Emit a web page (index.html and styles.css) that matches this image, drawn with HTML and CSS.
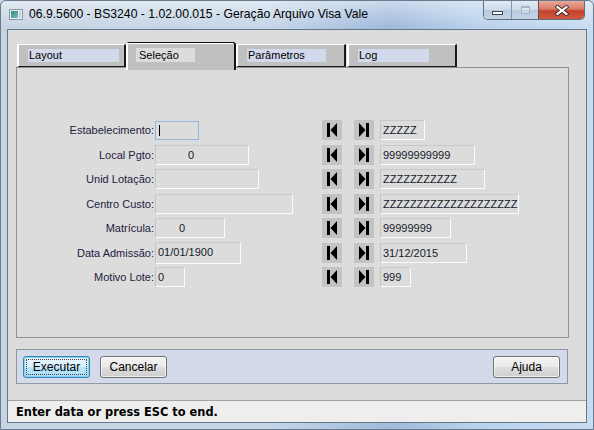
FILE: index.html
```html
<!DOCTYPE html>
<html lang="pt-BR">
<head>
<meta charset="utf-8">
<title>Geração Arquivo Visa Vale</title>
<link rel="stylesheet" href="styles.css">
</head>
<body>
<div class="window">
  <div class="titlebar">
    <svg class="app-icon" width="14" height="11" viewBox="0 0 14 11">
      <defs>
        <linearGradient id="appfill" x1="0" y1="0" x2="1" y2="1">
          <stop offset="0" stop-color="#2f8f6f"/>
          <stop offset="1" stop-color="#7fb6cf"/>
        </linearGradient>
      </defs>
      <rect x="0.5" y="0.5" width="13" height="10" fill="#e9eef2" stroke="#8a96a2"/>
      <rect x="2" y="2" width="7" height="7" fill="url(#appfill)"/>
      <rect x="10" y="2" width="2" height="7" fill="#c9d2da"/>
    </svg>
    <span class="title">06.9.5600 - BS3240 - 1.02.00.015 - Geração Arquivo Visa Vale</span>
    <div class="controls">
      <div class="ctl ctl-min"><span class="min-bar"></span></div>
      <div class="ctl ctl-max"><span class="max-box"></span></div>
      <div class="ctl ctl-close">
        <svg width="14" height="11" viewBox="0 0 14 11">
          <path d="M2.5 2 L11.5 9 M11.5 2 L2.5 9" stroke="#3d2a2a" stroke-width="4" stroke-linecap="square"/>
          <path d="M2.5 2 L11.5 9 M11.5 2 L2.5 9" stroke="#ffffff" stroke-width="2.2" stroke-linecap="square"/>
        </svg>
      </div>
    </div>
  </div>

  <div class="client">
    <div class="tabs">
      <div class="tab"><span class="tab-label tl-layout">Layout</span></div>
      <div class="tab tab-active"><span class="tab-label tl-selecao">Seleção</span></div>
      <div class="tab"><span class="tab-label tl-param">Parâmetros</span></div>
      <div class="tab tab-log"><span class="tab-label tl-log">Log</span></div>
    </div>

    <div class="panel">
      <div class="form">
        <div class="row">
          <span class="lbl">Estabelecimento:</span>
          <div class="left-cell"><div class="field focus w44"><span class="caret"></span></div></div>
          <span class="nav"><svg width="10" height="14" viewBox="0 0 10 14"><rect x="0" y="0" width="3" height="14"/><polygon points="10,0 3.5,7 10,14"/></svg></span>
          <span class="nav"><svg width="10" height="14" viewBox="0 0 10 14"><polygon points="0,0 6.5,7 0,14"/><rect x="7" y="0" width="3" height="14"/></svg></span>
          <div class="field w45">ZZZZZ</div>
        </div>
        <div class="row">
          <span class="lbl">Local Pgto:</span>
          <div class="left-cell"><div class="field w94 pad-num">0</div></div>
          <span class="nav"><svg width="10" height="14" viewBox="0 0 10 14"><rect x="0" y="0" width="3" height="14"/><polygon points="10,0 3.5,7 10,14"/></svg></span>
          <span class="nav"><svg width="10" height="14" viewBox="0 0 10 14"><polygon points="0,0 6.5,7 0,14"/><rect x="7" y="0" width="3" height="14"/></svg></span>
          <div class="field w95">99999999999</div>
        </div>
        <div class="row">
          <span class="lbl">Unid Lotação:</span>
          <div class="left-cell"><div class="field w104"></div></div>
          <span class="nav"><svg width="10" height="14" viewBox="0 0 10 14"><rect x="0" y="0" width="3" height="14"/><polygon points="10,0 3.5,7 10,14"/></svg></span>
          <span class="nav"><svg width="10" height="14" viewBox="0 0 10 14"><polygon points="0,0 6.5,7 0,14"/><rect x="7" y="0" width="3" height="14"/></svg></span>
          <div class="field w105">ZZZZZZZZZZZ</div>
        </div>
        <div class="row">
          <span class="lbl">Centro Custo:</span>
          <div class="left-cell"><div class="field w138"></div></div>
          <span class="nav"><svg width="10" height="14" viewBox="0 0 10 14"><rect x="0" y="0" width="3" height="14"/><polygon points="10,0 3.5,7 10,14"/></svg></span>
          <span class="nav"><svg width="10" height="14" viewBox="0 0 10 14"><polygon points="0,0 6.5,7 0,14"/><rect x="7" y="0" width="3" height="14"/></svg></span>
          <div class="field w139">ZZZZZZZZZZZZZZZZZZZZ</div>
        </div>
        <div class="row">
          <span class="lbl">Matrícula:</span>
          <div class="left-cell"><div class="field w70 pad-mat">0</div></div>
          <span class="nav"><svg width="10" height="14" viewBox="0 0 10 14"><rect x="0" y="0" width="3" height="14"/><polygon points="10,0 3.5,7 10,14"/></svg></span>
          <span class="nav"><svg width="10" height="14" viewBox="0 0 10 14"><polygon points="0,0 6.5,7 0,14"/><rect x="7" y="0" width="3" height="14"/></svg></span>
          <div class="field w71">99999999</div>
        </div>
        <div class="row">
          <span class="lbl">Data Admissão:</span>
          <div class="left-cell"><div class="field w86 tall">01/01/1900</div></div>
          <span class="nav"><svg width="10" height="14" viewBox="0 0 10 14"><rect x="0" y="0" width="3" height="14"/><polygon points="10,0 3.5,7 10,14"/></svg></span>
          <span class="nav"><svg width="10" height="14" viewBox="0 0 10 14"><polygon points="0,0 6.5,7 0,14"/><rect x="7" y="0" width="3" height="14"/></svg></span>
          <div class="field w87">31/12/2015</div>
        </div>
        <div class="row">
          <span class="lbl">Motivo Lote:</span>
          <div class="left-cell"><div class="field w30">0</div></div>
          <span class="nav"><svg width="10" height="14" viewBox="0 0 10 14"><rect x="0" y="0" width="3" height="14"/><polygon points="10,0 3.5,7 10,14"/></svg></span>
          <span class="nav"><svg width="10" height="14" viewBox="0 0 10 14"><polygon points="0,0 6.5,7 0,14"/><rect x="7" y="0" width="3" height="14"/></svg></span>
          <div class="field w31">999</div>
        </div>
      </div>
    </div>

    <div class="buttonbar">
      <button class="btn btn-default"><span class="focus-ring">Executar</span></button>
      <button class="btn">Cancelar</button>
      <button class="btn btn-help">Ajuda</button>
    </div>

    <div class="status">Enter data or press ESC to end.</div>
  </div>
</div>
</body>
</html>
```
FILE: styles.css
```css
* { box-sizing: border-box; }

html, body {
  margin: 0;
  padding: 0;
}

body {
  width: 594px;
  height: 430px;
  overflow: hidden;
  background: #c4d7ec;
  font-family: "Liberation Sans", Arial, sans-serif;
}

/* ---- window frame ---- */
.window {
  width: 594px;
  height: 430px;
  display: flex;
  flex-direction: column;
  border: 1px solid #6b7b8f;
  border-radius: 6px 6px 0 0;
  background:
    linear-gradient(180deg, rgba(255,255,255,0.45) 0px, rgba(255,255,255,0) 26px),
    linear-gradient(90deg, #c7d4e2 0%, #c6d6e8 45%, #9fbadb 66%, #b9d1ec 80%, #c8dcf1 100%);
}

.titlebar {
  height: 28px;
  flex: none;
  display: flex;
  align-items: flex-start;
}

.app-icon {
  margin: 8px 0 0 8px;
  flex: none;
}

.title {
  margin: 6px 0 0 6px;
  font-size: 12.2px;
  line-height: 15px;
  color: #000;
  white-space: nowrap;
}

.controls {
  margin-left: auto;
  margin-right: 8px;
  display: flex;
  height: 19px;
  border: 1px solid #5d6d84;
  border-top: none;
  border-radius: 0 0 5px 5px;
  overflow: hidden;
}

.ctl {
  height: 18px;
  display: flex;
  align-items: center;
  justify-content: center;
}

.ctl-min {
  width: 28px;
  border-right: 1px solid #8797ab;
  background: linear-gradient(180deg, #e1e9f3 0%, #cfdbea 48%, #b8c9de 52%, #c4d4e6 100%);
}

.ctl-max {
  width: 27px;
  border-right: 1px solid #6b4a4a;
  background: linear-gradient(180deg, #e1e9f3 0%, #cfdbea 48%, #b8c9de 52%, #c4d4e6 100%);
}

.ctl-close {
  width: 45px;
  background: linear-gradient(180deg, #e9a99b 0%, #d97a66 45%, #c4412a 55%, #cf5a3e 100%);
}

.min-bar {
  width: 11px;
  height: 4px;
  margin-top: 5px;
  background: #fff;
  border: 1px solid #3b4658;
}

.max-box {
  width: 9px;
  height: 8px;
  border: 1px solid #a6b4c6;
  border-top-width: 2px;
  background: rgba(255,255,255,0.25);
}

/* ---- client area ---- */
.client {
  flex: 1;
  margin: 0 6px 6px 6px;
  border: 1px solid #66768a;
  background: #dcdcdc;
  display: flex;
  flex-direction: column;
}

/* tab strip */
.tabs {
  height: 25px;
  margin: 12px 0 0 9px;
  display: flex;
  align-items: flex-start;
  flex: none;
}

.tab {
  width: 109px;
  height: 23px;
  margin-top: 2px;
  background: #c0c0c0;
  border-top: 1px solid #ffffff;
  border-left: 2px solid #ffffff;
  border-right: 2px solid #1a1a1a;
  border-bottom: 1px solid #1a1a1a;
  padding: 4px 0 0 9px;
}

.tab + .tab { width: 110px; }
.tab-log { margin-left: 1px; }

.tab-active {
  position: relative;
  z-index: 1;
  height: 28px;
  margin-top: 0;
  margin-bottom: -3px;
  border-top: 1px solid #111;
  border-right: 2px solid #111;
  border-bottom: none;
  border-radius: 3px 3px 0 0;
  box-shadow: inset 0 1px 0 #ffffff;
  padding: 5px 0 0 8px;
}

.tab-label {
  display: block;
  height: 13px;
  padding-left: 1px;
  font-size: 11px;
  line-height: 13px;
  color: #000;
  background: #d1d9ea;
  white-space: nowrap;
}

.tab-active .tab-label {
  height: 14px;
  line-height: 14px;
  background: #dcdcdc;
  padding-left: 3px;
}

.tl-layout { width: 91px; }
.tl-selecao { width: 59px; }
.tl-param { width: 79px; }
.tl-log { width: 71px; }

/* tab page */
.panel {
  width: 553px;
  height: 271px;
  margin-left: 8px;
  border: 1px solid #8a929c;
  flex: none;
}

.form {
  padding-top: 50px;
}

.row {
  height: 24.5px;
  display: flex;
  align-items: center;
}

.lbl {
  width: 137px;
  flex: none;
  text-align: right;
  font-size: 11px;
  color: #1c2140;
  white-space: nowrap;
}

.left-cell {
  width: 167px;
  flex: none;
  margin-left: 1px;
  display: flex;
  align-items: center;
}

.field {
  height: 20px;
  flex: none;
  padding-left: 2px;
  font-size: 11px;
  line-height: 18px;
  color: #151a2a;
  white-space: nowrap;
  border: 1px solid;
  border-color: #c9c9c9 #fbfbfb #fbfbfb #c3c3c3;
  background: #dcdcdc;
}

.field.tall { height: 22px; line-height: 19px; }

.field.focus {
  height: 19px;
  border-color: #8fb6dc;
  display: flex;
  align-items: center;
}

.caret {
  width: 1px;
  height: 11px;
  background: #000;
  margin-left: 1px;
}

.pad-num { padding-left: 32px; }
.pad-mat { padding-left: 23px; }

.w30 { width: 30px; }
.w31 { width: 31px; }
.w44 { width: 44px; }
.w45 { width: 45px; }
.w70 { width: 70px; }
.w71 { width: 71px; }
.w86 { width: 86px; }
.w87 { width: 87px; }
.w94 { width: 94px; }
.w95 { width: 95px; }
.w104 { width: 104px; }
.w105 { width: 105px; }
.w138 { width: 138px; }
.w139 { width: 139px; }

.nav {
  width: 20px;
  height: 20px;
  flex: none;
  background: #c3c3c3;
  display: flex;
  align-items: center;
  justify-content: center;
  fill: #000;
}

.nav + .nav { margin-left: 12px; }
.nav + .nav + .field { margin-left: 6px; }

/* button bar */
.buttonbar {
  width: 552px;
  height: 35px;
  margin: 11px 0 0 8px;
  border: 1px solid #8e97a2;
  background: #d3dbea;
  display: flex;
  align-items: flex-start;
  padding: 6px 7px 0 6px;
  flex: none;
}

.btn {
  width: 67px;
  height: 22px;
  padding: 0;
  font-family: "Liberation Sans", Arial, sans-serif;
  font-size: 12px;
  color: #000;
  border: 1px solid #707070;
  border-radius: 3px;
  background: linear-gradient(180deg, #f2f2f2 0%, #ebebeb 48%, #dddddd 52%, #cfcfcf 100%);
  box-shadow: inset 0 0 0 1px rgba(255,255,255,0.7);
  display: flex;
  align-items: center;
  justify-content: center;
}

.btn + .btn { margin-left: 10px; }

.btn-default {
  border-color: #3c7fb1;
  background: linear-gradient(180deg, #eaf6fd 0%, #d9f0fc 48%, #bee6fd 52%, #a7d9f5 100%);
  box-shadow: inset 0 0 0 1px #7fd3f7;
}

.focus-ring {
  width: 61px;
  height: 16px;
  line-height: 14px;
  text-align: center;
  border: 1px dotted #444;
}

.btn.btn-help { margin-left: auto; }

/* status line */
.status {
  flex: 1;
  margin-top: 16px;
  border-top: 1px solid #a3a3a3;
  background: #f0eeed;
  padding: 4px 0 0 8px;
  font-family: "DejaVu Sans", Verdana, sans-serif;
  font-weight: bold;
  font-size: 11.4px;
  color: #000;
  white-space: nowrap;
}
```
